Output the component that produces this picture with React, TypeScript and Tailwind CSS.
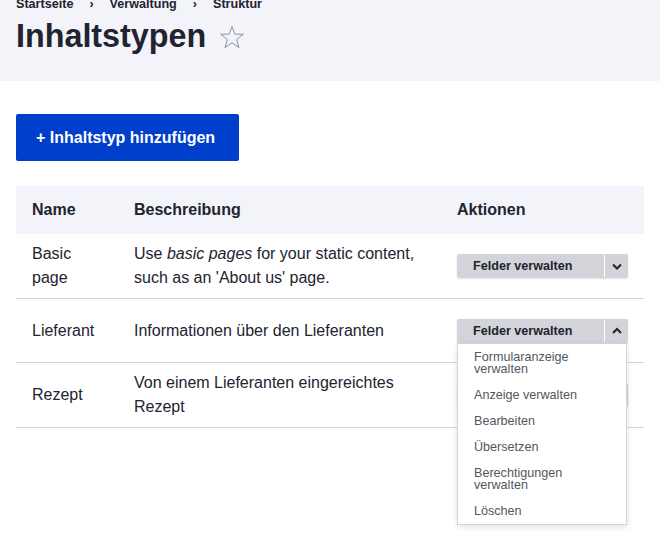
import React from "react";

function Chevron({ up = false }: { up?: boolean }) {
  return (
    <svg width="10" height="7" viewBox="0 0 10 7" fill="none">
      <path
        d={up ? "M1 6 L5 2 L9 6" : "M1 1.5 L5 5.5 L9 1.5"}
        stroke="#222330"
        strokeWidth="2"
      />
    </svg>
  );
}

function Star() {
  return (
    <svg width="24" height="22" viewBox="0 0 24 22" fill="none">
      <path
        d="M12 0.6 L14.82 8.12 L23.3 8.3 L16.57 13.48 L19.05 21.5 L12 16.8 L4.95 21.5 L7.43 13.48 L0.7 8.3 L9.18 8.12 Z"
        stroke="#8e929c"
        strokeWidth="1"
        strokeLinejoin="miter"
      />
    </svg>
  );
}

function ActionButton({ open = false }: { open?: boolean }) {
  const items: string[][] = [
    ["Formularanzeige", "verwalten"],
    ["Anzeige verwalten"],
    ["Bearbeiten"],
    ["Übersetzen"],
    ["Berechtigungen", "verwalten"],
    ["Löschen"],
  ];
  return (
    <div className="relative w-[171px]">
      <div className="flex h-6 w-[171px] rounded-[2px] bg-[#d3d4d9] shadow-[0_1px_2px_rgba(0,0,0,0.12)]">
        <div className="w-[147px] pl-4 text-[12.6px] font-bold leading-6 text-[#222330]">
          Felder verwalten
        </div>
        <div className="my-[1px] w-px bg-white" />
        <div className="flex flex-1 items-center justify-center">
          <Chevron up={open} />
        </div>
      </div>
      {open && (
        <div className="absolute left-0 top-6 z-10 w-[170px] border border-[#d3d4d9] bg-white shadow-[0_2px_6px_rgba(0,0,0,0.12)]">
          {items.map((lines, i) => (
            <div
              key={i}
              className="px-4 py-[7px] text-[12.6px] leading-3 text-[#55565b]"
            >
              {lines.map((l, j) => (
                <div key={j}>{l}</div>
              ))}
            </div>
          ))}
        </div>
      )}
    </div>
  );
}

export default function App() {
  return (
    <div className="min-h-screen bg-white font-['Liberation_Sans',Arial,sans-serif] text-[#222330]">
      <div className="flow-root bg-[#f3f4f9] px-4 pb-[25px]">
        <nav className="-mt-[2px] flex text-[12.6px] font-bold leading-[13px]">
          <span>Startseite</span>
          <span className="px-4">›</span>
          <span>Verwaltung</span>
          <span className="px-4">›</span>
          <span>Struktur</span>
        </nav>
        <div className="mt-[5px] flex h-10 items-center">
          <h1 className="text-[32.3px] font-bold leading-10">Inhaltstypen</h1>
          <div className="ml-[14px] mt-[2px]">
            <Star />
          </div>
        </div>
      </div>

      <div className="px-4">
        <button className="mt-[33px] flex h-[47px] w-[223px] items-center rounded-[2px] bg-[#003ecc] px-5 text-base font-bold text-white">
          + Inhaltstyp hinzufügen
        </button>

        <div className="mt-[25px]">
          <div className="grid h-12 grid-cols-[102px_323px_1fr] items-center bg-[#f3f4f9] text-base font-bold leading-6">
            <div className="px-4">Name</div>
            <div className="px-4">Beschreibung</div>
            <div className="px-4">Aktionen</div>
          </div>

          <div className="grid min-h-16 grid-cols-[102px_323px_1fr] items-center border-b border-[#d3d4d9] text-base leading-6">
            <div className="px-4 py-2">Basic page</div>
            <div className="px-4 py-2">
              Use <em>basic pages</em> for your static content, such as an
              'About us' page.
            </div>
            <div className="px-4 py-2">
              <ActionButton />
            </div>
          </div>

          <div className="relative z-10 grid min-h-16 grid-cols-[102px_323px_1fr] items-center border-b border-[#d3d4d9] text-base leading-6">
            <div className="px-4 py-2">Lieferant</div>
            <div className="px-4 py-2">Informationen über den Lieferanten</div>
            <div className="px-4 py-2">
              <ActionButton open />
            </div>
          </div>

          <div className="grid min-h-16 grid-cols-[102px_323px_1fr] items-center border-b border-[#d3d4d9] text-base leading-6">
            <div className="px-4 py-2">Rezept</div>
            <div className="px-4 py-2">
              Von einem Lieferanten eingereichtes Rezept
            </div>
            <div className="px-4 py-2">
              <ActionButton />
            </div>
          </div>
        </div>
      </div>
    </div>
  );
}
